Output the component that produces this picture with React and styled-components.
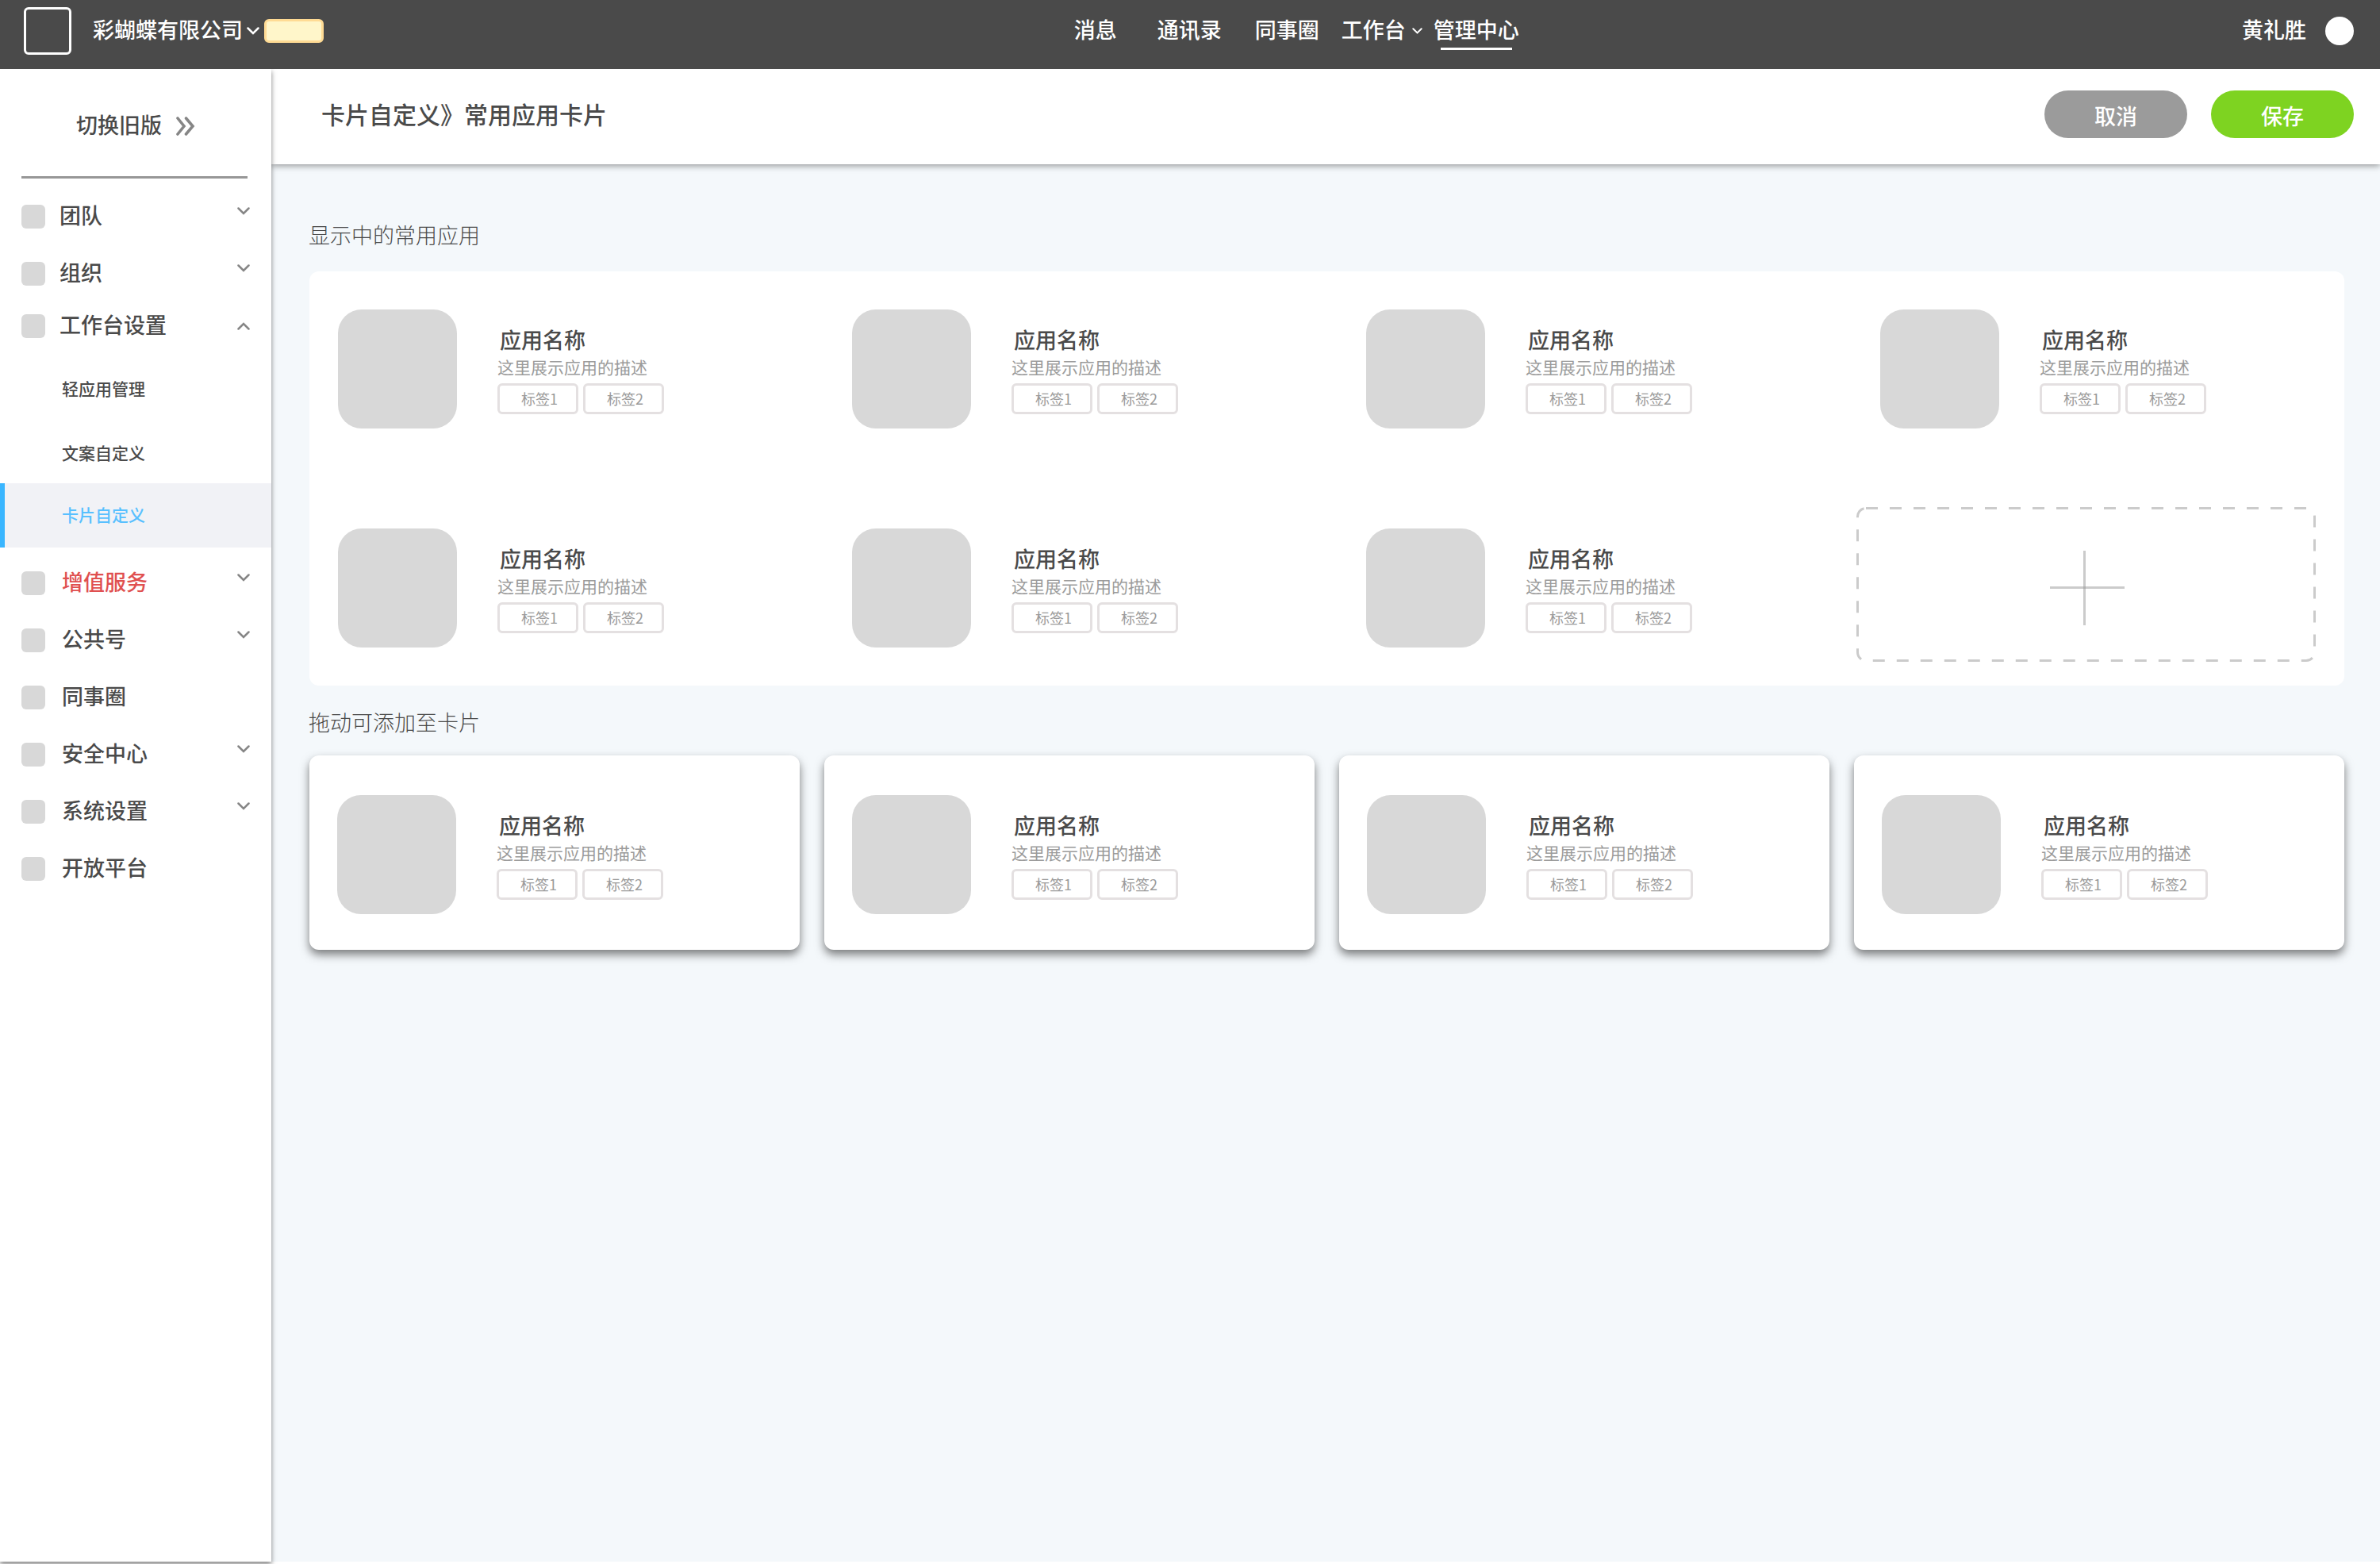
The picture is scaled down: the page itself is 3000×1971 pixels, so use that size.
import React from "react";
import styled, { createGlobalStyle, css } from "styled-components";

const color = {
  bar: "#4a4a4a",
  text: "#4a4a4a",
  muted: "#9b9b9b",
  placeholder: "#d8d8d8",
  canvas: "#f4f8fb",
  accent: "#3ab6ff",
  danger: "#e05050",
  save: "#7ed321",
};

const GlobalStyle = createGlobalStyle`
  *, *::before, *::after { box-sizing: border-box; }
  body {
    margin: 0;
    background: #fff;
    color: ${color.text};
    font-family: "Noto Sans CJK SC", "Noto Sans", sans-serif;
    font-size: 27px;
    font-weight: 500;
    line-height: 36px;
  }
  h1, h2, h3, p, ul { margin: 0; padding: 0; font: inherit; }
  ul { list-style: none; }
  a { color: inherit; text-decoration: none; }
  button { border: 0; padding: 0; background: none; color: inherit; font: inherit; cursor: pointer; }
  svg { display: block; flex: none; }
`;

/* ---------- Page frame ---------- */

const Page = styled.div`
  display: flex;
  flex-direction: column;
  min-height: 100vh;
  padding-bottom: 3px;
`;

const Body = styled.div`
  display: flex;
  flex: 1;
`;

const Main = styled.main`
  display: flex;
  flex: 1;
  flex-direction: column;
  min-width: 0;
  background: ${color.canvas};
`;

/* Lifts the glyphs to the optical middle of the row they share with an icon. */
const Label = styled.span`
  padding-bottom: 4px;
`;

/* ---------- Top bar ---------- */

const TopBar = styled.header`
  position: relative;
  z-index: 3;
  display: grid;
  grid-template-columns: 45% 1fr auto;
  align-items: center;
  padding: 9px 33px 18px 30px;
  background: ${color.bar};
  color: #fff;
`;

const Company = styled.div`
  display: flex;
  align-items: center;
`;

const Logo = styled.span`
  width: 60px;
  height: 60px;
  margin-right: 27px;
  border: 3px solid #fff;
  border-radius: 6px;
`;

const CompanyButton = styled.button`
  display: flex;
  align-items: center;
  gap: 5px;
`;

const Badge = styled.span`
  width: 75px;
  height: 30px;
  margin-left: 6px;
  border: 3px solid #ffdb94;
  border-radius: 6px;
  background: #fff6ca;
`;

const TopNav = styled.nav`
  display: flex;
  align-items: center;
  padding-left: 2px;
`;

const TopLink = styled.a`
  position: relative;
  display: flex;
  align-items: center;
  gap: 8px;
  margin-right: ${(p) => p.$gap}px;

  ${(p) =>
    p.$active &&
    css`
      &::after {
        content: "";
        position: absolute;
        right: 9px;
        bottom: -4px;
        left: 9px;
        height: 3px;
        background: #fff;
      }
    `}
`;

const User = styled.div`
  display: flex;
  align-items: center;
  gap: 24px;
`;

const Avatar = styled.span`
  width: 36px;
  height: 36px;
  border-radius: 50%;
  background: #fff;
`;

/* ---------- Sidebar ---------- */

const Sidebar = styled.aside`
  position: relative;
  z-index: 2;
  flex: none;
  width: 342px;
  background: #fff;
  box-shadow: 0 3px 6px rgba(0, 0, 0, 0.5);
`;

const SwitchVersion = styled.button`
  display: flex;
  align-items: center;
  gap: 18px;
  margin: 52px 0 43px 96px;
`;

const Divider = styled.hr`
  height: 3px;
  margin: 0 30px 33px 27px;
  border: 0;
  background: #979797;
`;

const MenuGroup = styled.ul`
  display: flex;
  flex-direction: column;
  gap: 42px;
  --label-gap: ${(p) => p.$labelGap}px;
`;

const MenuLink = styled.a`
  display: flex;
  align-items: center;
  height: 30px;
  padding: 0 27px;
  color: ${(p) => (p.$danger ? color.danger : color.text)};
`;

const MenuIcon = styled.span`
  width: 30px;
  height: 30px;
  margin-right: var(--label-gap);
  border-radius: 6px;
  background: ${color.placeholder};
`;

const MenuArrow = styled.span`
  margin-left: auto;
  padding-bottom: ${(p) => (p.$open ? 0 : 15)}px;
`;

const ExpandedItem = styled.li`
  margin-top: -6px;
`;

const SubMenu = styled.ul`
  margin: 21px 0 30px;
`;

const SubLink = styled.a`
  display: flex;
  align-items: center;
  height: 81px;
  padding: 2px 0 0 78px;
  font-size: 21px;
  line-height: 30px;

  ${(p) =>
    p.$active &&
    css`
      padding: 0 0 3px 72px;
      border-left: 6px solid ${color.accent};
      background: #f1f2f6;
      color: #58c0ff;
    `}
`;

/* ---------- Title bar ---------- */

const TitleBar = styled.div`
  position: relative;
  z-index: 1;
  display: flex;
  align-items: center;
  gap: 30px;
  height: 120px;
  padding: 0 33px 6px 63px;
  background: #fff;
  box-shadow: 0 2px 8px rgba(0, 0, 0, 0.4);
`;

const PageTitle = styled.h1`
  flex: 1;
  padding-bottom: 2px;
  font-size: 30px;
  line-height: 42px;
`;

const PillButton = styled.button`
  width: 180px;
  height: 60px;
  padding-top: 3px;
  border-radius: 30px;
  background: ${(p) => (p.$primary ? color.save : color.muted)};
  color: #fff;
`;

/* ---------- Cards ---------- */

const Content = styled.div`
  padding: 71px 45px 60px 48px;
`;

const SectionTitle = styled.h2`
  margin: 0 0 24px -1px;
  font-weight: 300;
`;

const Panel = styled.section`
  display: grid;
  grid-template-columns: repeat(4, 1fr);
  grid-auto-rows: 195px;
  gap: 81px 69px;
  margin: 28px 0;
  padding: 21px 36px 30px 6px;
  border-radius: 12px;
  background: #fff;
`;

const PanelCell = styled.div`
  padding: 27px 0 0 30px;
`;

const CardGrid = styled.section`
  display: grid;
  grid-template-columns: repeat(4, 1fr);
  gap: 31px;
`;

const Card = styled.div`
  height: 245px;
  padding: 50px 0 0 35px;
  border-radius: 12px;
  background: #fff;
  box-shadow: 0 6px 12px rgba(0, 0, 0, 0.5);
`;

const AppRow = styled.article`
  display: flex;
  gap: 51px;
`;

const AppIcon = styled.span`
  flex: none;
  width: 150px;
  height: 150px;
  border-radius: 30px;
  background: ${color.placeholder};
`;

const AppInfo = styled.div`
  padding-top: 20px;
`;

const AppName = styled.h3`
  padding-left: 3px;
`;

const AppDescription = styled.p`
  color: ${color.muted};
  font-size: 21px;
  font-weight: 400;
  line-height: 33px;
`;

const Tags = styled.ul`
  display: flex;
  gap: 6px;
  margin-top: 4px;
`;

const Tag = styled.li`
  width: 102px;
  height: 39px;
  padding-left: 27px;
  border: 3px solid #e4e0e1;
  border-radius: 6px;
  color: ${color.muted};
  font-size: 18px;
  font-weight: 400;
  line-height: 33px;
`;

const AddButton = styled.button`
  position: relative;
  display: flex;
  align-items: center;
  justify-content: center;
  padding: 9px 0 0 3px;
`;

const DashedOutline = styled.svg`
  position: absolute;
  inset: 0;
  width: 100%;
  height: 100%;

  rect {
    width: calc(100% - 3px);
    height: calc(100% - 3px);
    fill: none;
    stroke: #cbcbcb;
    stroke-width: 3px;
    stroke-dasharray: 15px;
  }
`;

/* ---------- Icons ---------- */

function Chevron({ up, width = 16, height = 10, stroke = "#868686" }) {
  return (
    <svg width={width} height={height} viewBox="0 0 16 10" aria-hidden="true">
      <path
        d={up ? "M1.5 8.5L8 2L14.5 8.5" : "M1.5 1.5L8 8L14.5 1.5"}
        fill="none"
        stroke={stroke}
        strokeLinecap="round"
        strokeWidth="2.5"
      />
    </svg>
  );
}

function DoubleChevron() {
  return (
    <svg width="24" height="24" viewBox="0 0 24 24" aria-hidden="true">
      <path
        d="M2 2L10 12L2 22M12.5 2L21 12L12.5 22"
        fill="none"
        stroke="#868686"
        strokeLinecap="round"
        strokeWidth="3.6"
      />
    </svg>
  );
}

function Plus() {
  return (
    <svg width="94" height="94" viewBox="0 0 94 94" aria-hidden="true">
      <g stroke="#979797" strokeOpacity="0.5" strokeWidth="3">
        <path d="M0 46.5H94" />
        <path d="M43.5 0V94" />
      </g>
    </svg>
  );
}

/* ---------- Data ---------- */

const topLinks = [
  { label: "消息", gap: 51 },
  { label: "通讯录", gap: 42 },
  { label: "同事圈", gap: 28 },
  { label: "工作台", gap: 14, menu: true },
  { label: "管理中心", gap: 0, active: true },
];

const upperMenu = [{ label: "团队" }, { label: "组织" }];

const workbenchMenu = [
  { label: "轻应用管理" },
  { label: "文案自定义" },
  { label: "卡片自定义", active: true },
];

const lowerMenu = [
  { label: "增值服务", danger: true, arrow: true },
  { label: "公共号", arrow: true },
  { label: "同事圈" },
  { label: "安全中心", arrow: true },
  { label: "系统设置", arrow: true },
  { label: "开放平台" },
];

const app = { name: "应用名称", description: "这里展示应用的描述", tags: ["标签1", "标签2"] };
const shownApps = Array.from({ length: 7 }, () => app);
const availableApps = Array.from({ length: 4 }, () => app);

/* ---------- Parts ---------- */

function MenuItem({ label, danger, arrow, open }) {
  return (
    <MenuLink href="#" $danger={danger}>
      <MenuIcon />
      <Label>{label}</Label>
      {arrow && (
        <MenuArrow $open={open}>
          <Chevron up={open} />
        </MenuArrow>
      )}
    </MenuLink>
  );
}

function AppSummary({ name, description, tags }) {
  return (
    <AppRow>
      <AppIcon />
      <AppInfo>
        <AppName>{name}</AppName>
        <AppDescription>{description}</AppDescription>
        <Tags>
          {tags.map((tag) => (
            <Tag key={tag}>{tag}</Tag>
          ))}
        </Tags>
      </AppInfo>
    </AppRow>
  );
}

export default function App() {
  return (
    <>
      <GlobalStyle />
      <Page>
        <TopBar>
          <Company>
            <Logo />
            <CompanyButton type="button">
              <Label>彩蝴蝶有限公司</Label>
              <Chevron stroke="#fff" />
            </CompanyButton>
            <Badge />
          </Company>
          <TopNav>
            {topLinks.map(({ label, gap, menu, active }) => (
              <TopLink key={label} href="#" $gap={gap} $active={active}>
                <Label>{label}</Label>
                {menu && <Chevron width={13} height={8} stroke="#fff" />}
              </TopLink>
            ))}
          </TopNav>
          <User>
            <Label>黄礼胜</Label>
            <Avatar />
          </User>
        </TopBar>

        <Body>
          <Sidebar>
            <SwitchVersion type="button">
              <Label>切换旧版</Label>
              <DoubleChevron />
            </SwitchVersion>
            <Divider />
            <nav>
              <MenuGroup $labelGap={18}>
                {upperMenu.map(({ label }) => (
                  <li key={label}>
                    <MenuItem label={label} arrow />
                  </li>
                ))}
                <ExpandedItem>
                  <MenuItem label="工作台设置" arrow open />
                  <SubMenu>
                    {workbenchMenu.map(({ label, active }) => (
                      <li key={label}>
                        <SubLink href="#" $active={active}>
                          {label}
                        </SubLink>
                      </li>
                    ))}
                  </SubMenu>
                </ExpandedItem>
              </MenuGroup>
              <MenuGroup $labelGap={21}>
                {lowerMenu.map((item) => (
                  <li key={item.label}>
                    <MenuItem {...item} />
                  </li>
                ))}
              </MenuGroup>
            </nav>
          </Sidebar>

          <Main>
            <TitleBar>
              <PageTitle>卡片自定义》常用应用卡片</PageTitle>
              <PillButton type="button">取消</PillButton>
              <PillButton type="button" $primary>
                保存
              </PillButton>
            </TitleBar>

            <Content>
              <SectionTitle>显示中的常用应用</SectionTitle>
              <Panel>
                {shownApps.map((item, index) => (
                  <PanelCell key={index}>
                    <AppSummary {...item} />
                  </PanelCell>
                ))}
                <AddButton type="button" aria-label="添加应用">
                  <DashedOutline aria-hidden="true">
                    <rect x="1.5" y="1.5" rx="10.5" />
                  </DashedOutline>
                  <Plus />
                </AddButton>
              </Panel>

              <SectionTitle>拖动可添加至卡片</SectionTitle>
              <CardGrid>
                {availableApps.map((item, index) => (
                  <Card key={index}>
                    <AppSummary {...item} />
                  </Card>
                ))}
              </CardGrid>
            </Content>
          </Main>
        </Body>
      </Page>
    </>
  );
}
